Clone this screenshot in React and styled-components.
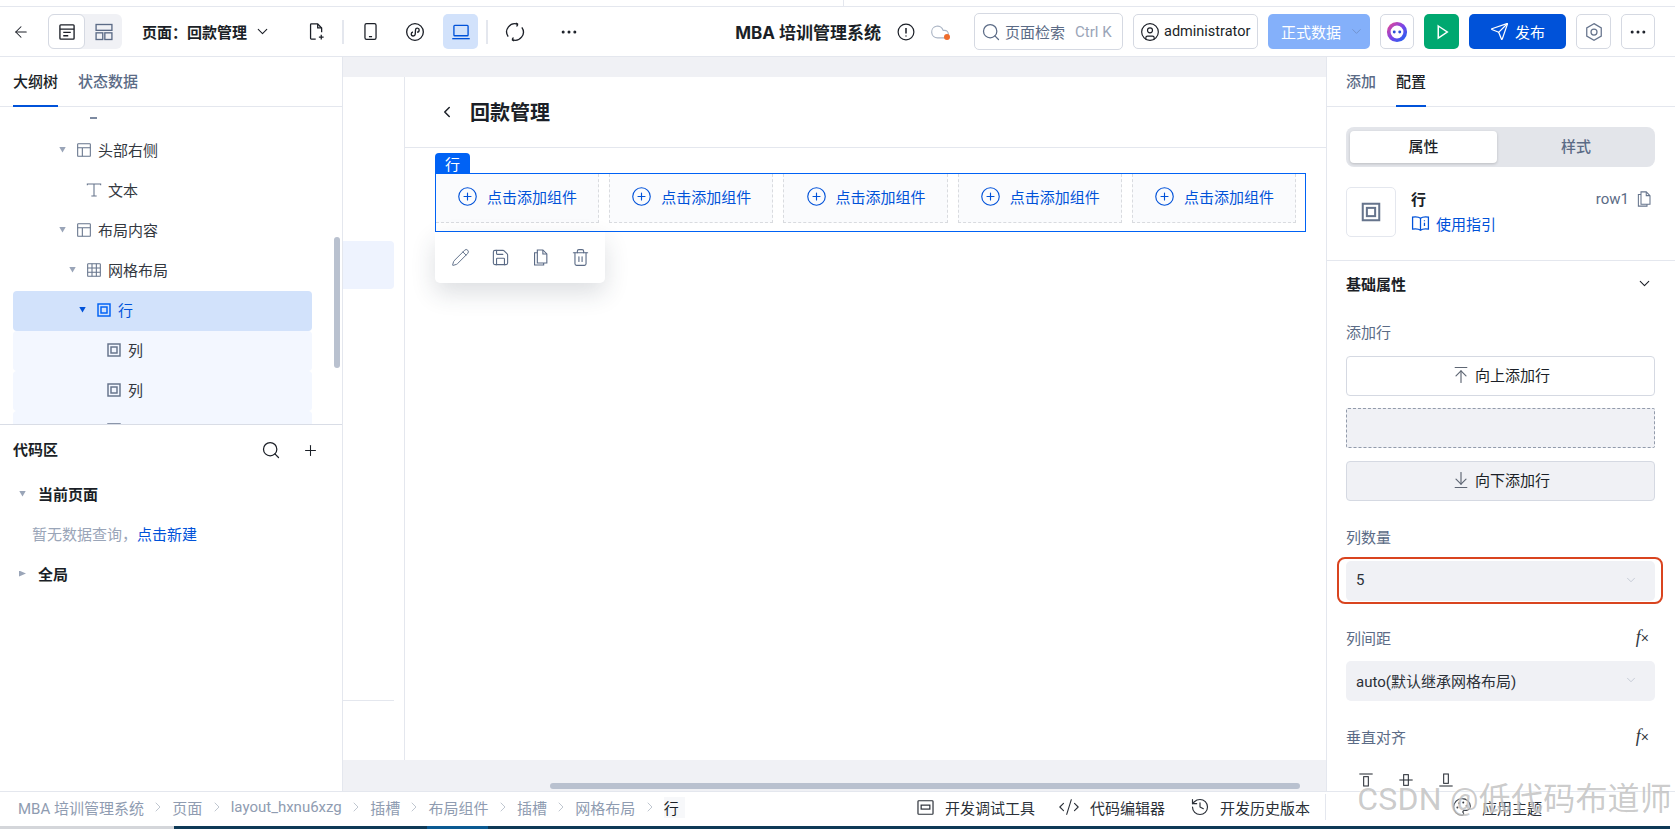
import React from "react";
import styled, { createGlobalStyle } from "styled-components";
import {
  ArrowLeft,
  ArrowDownToLine,
  ArrowUpToLine,
  ChevronDown,
  ChevronLeft,
  ChevronRight,
  CircleUser,
  Cloud,
  CodeXml,
  Ellipsis,
  History,
  Palette,
  Pencil,
  Plus,
  CirclePlus,
  Save,
  Search,
  Send,
  Trash2,
} from "lucide-react";

const colors = {
  ink: "#1b1f27",
  slate: "#5b6b86",
  muted: "#9aa5b8",
  line: "#e4e7ee",
  grey: "#f0f1f5",
  blue: "#0052d9",
  bright: "#0062f5",
  selected: "#d2e2fb",
  tint: "#f3f7ff",
};

const GlobalStyle = createGlobalStyle`
  html, body {
    margin: 0;
    height: 100%;
    overflow: hidden;
    background: #fff;
  }
  * { box-sizing: border-box; }
  body {
    font-family: Roboto, "Noto Sans CJK SC", sans-serif;
    font-size: 15px;
    color: ${colors.ink};
  }
`;

const Page = styled.div`
  position: relative;
  width: 1675px;
  height: 829px;
  display: flex;
  flex-direction: column;
  overflow: hidden;
`;

const TopStrip = styled.div`
  height: 7px;
  flex: none;
  border-bottom: 1px solid ${colors.line};
  padding-left: 843px;
  & > div {
    width: 1px;
    height: 6px;
    background: ${colors.line};
  }
`;

const Toolbar = styled.header`
  height: 50px;
  flex: none;
  display: flex;
  align-items: center;
  padding: 0 20px 0 12px;
  border-bottom: 1px solid ${colors.line};
`;

const Glyph = styled.svg.attrs((p) => ({
  viewBox: "0 0 24 24",
  fill: "none",
  stroke: "currentColor",
  strokeWidth: p.$weight || 1.6,
}))`
  width: ${(p) => p.$size || 18}px;
  height: ${(p) => p.$size || 18}px;
  flex: none;
  color: ${(p) => p.$color || "inherit"};
`;

const BackLink = styled.span`
  display: flex;
  width: 18px;
  margin-right: 18px;
`;

const ViewSwitch = styled.div`
  display: flex;
  width: 74px;
  height: 35px;
  background: ${colors.grey};
  border-radius: 6px;
  margin-right: 20px;
`;

const ViewOption = styled.span`
  width: 37px;
  display: flex;
  align-items: center;
  justify-content: center;
  border-radius: 6px;
  color: ${(p) => (p.$active ? colors.ink : colors.slate)};
  background: ${(p) => (p.$active ? "#fff" : "transparent")};
  border: ${(p) => (p.$active ? "1px solid #d5d9e2" : "none")};
`;

const PageTitle = styled.div`
  display: flex;
  align-items: center;
  gap: 7px;
  width: 147px;
  font-weight: 700;
  white-space: nowrap;
  margin-right: 10px;
  padding-bottom: 1px;
`;

const ToolButton = styled.span`
  width: 35px;
  height: 35px;
  display: flex;
  align-items: center;
  justify-content: center;
  border-radius: 5px;
  color: ${(p) => (p.$active ? colors.blue : colors.ink)};
  background: ${(p) => (p.$active ? colors.selected : "transparent")};
  margin-right: ${(p) => p.$gap ?? 9}px;
`;

const ToolDivider = styled.span`
  width: 2px;
  height: 24px;
  background: ${colors.line};
  margin-right: 9px;
`;

const RightTools = styled.div`
  margin-left: auto;
  display: flex;
  align-items: center;
  gap: 10px;
`;

const AppName = styled.div`
  font-size: 17px;
  font-weight: 700;
  white-space: nowrap;
  margin-right: 6px;
  font-family: Inter, "Noto Sans CJK SC", sans-serif;
`;

const CloudStatus = styled.span`
  position: relative;
  display: flex;
  width: 20px;
  margin: 0 14px 0 5px;
  color: #aab4c4;
  &::after {
    content: "";
    position: absolute;
    right: 0;
    bottom: 2px;
    width: 6px;
    height: 6px;
    border-radius: 50%;
    background: #ee6c2c;
  }
`;

const SearchBox = styled.div`
  width: 149px;
  height: 37px;
  display: flex;
  align-items: center;
  padding-left: 6px;
  border: 1px solid #d5d9e2;
  border-radius: 5px;
  color: ${colors.slate};
  white-space: nowrap;
  gap: 4px;
  & > em {
    font-style: normal;
    color: ${colors.muted};
    margin-left: 6px;
  }
`;

const UserBox = styled.div`
  width: 125px;
  height: 35px;
  display: flex;
  align-items: center;
  gap: 4px;
  padding-left: 6px;
  font-size: 14.5px;
  border: 1px solid #d5d9e2;
  border-radius: 5px;
`;

const DataSelect = styled.div`
  width: 102px;
  height: 35px;
  display: flex;
  align-items: center;
  gap: 8px;
  padding: 0 0 1px 13px;
  border-radius: 5px;
  background: #84b0fa;
  color: #fff;
  white-space: nowrap;
`;

const SquareButton = styled.span`
  width: ${(p) => p.$width || 35}px;
  height: 35px;
  display: flex;
  align-items: center;
  justify-content: center;
  border-radius: 5px;
  border: ${(p) => (p.$fill ? "none" : "1px solid #d5d9e2")};
  background: ${(p) => p.$fill || "#fff"};
  color: ${(p) => (p.$fill ? "#fff" : colors.ink)};
`;

const PublishButton = styled.span`
  width: 97px;
  height: 35px;
  display: flex;
  align-items: center;
  justify-content: center;
  gap: 6px;
  padding-bottom: 1px;
  border-radius: 5px;
  background: ${colors.blue};
  color: #fff;
`;

const Main = styled.main`
  flex: 1;
  min-height: 0;
  display: flex;
`;

const LeftPanel = styled.aside`
  width: 343px;
  flex: none;
  position: relative;
  display: flex;
  flex-direction: column;
  border-right: 1px solid ${colors.line};
`;

const TabRow = styled.div`
  height: 50px;
  flex: none;
  display: flex;
  gap: 20px;
  padding-left: ${(p) => p.$inset}px;
  border-bottom: 1px solid ${colors.line};
`;

const TabItem = styled.span`
  height: 50px;
  display: flex;
  align-items: center;
  padding-bottom: 2px;
  font-weight: 500;
  color: ${(p) => (p.$active ? colors.ink : colors.slate)};
  border-bottom: 2px solid ${(p) => (p.$active ? colors.blue : "transparent")};
`;

const Tree = styled.div`
  height: 318px;
  flex: none;
  overflow: hidden;
  padding: 0 30px 0 13px;
  border-bottom: 1px solid #d9dde6;
`;

const TreeStub = styled.div`
  height: 24px;
  padding: 10px 0 0 77px;
  &::before {
    content: "";
    display: block;
    width: 7px;
    height: 2px;
    background: #7d8aa1;
  }
`;

const TreeRow = styled.div`
  height: 40px;
  display: flex;
  align-items: center;
  padding: 0 0 3px ${(p) => 46 + p.$level * 10}px;
  border-radius: 4px;
  background: ${(p) =>
    p.$selected ? colors.selected : p.$child ? colors.tint : "transparent"};
  color: ${(p) => (p.$selected ? colors.blue : "#33383f")};
  & > svg {
    margin-right: 6px;
    color: ${(p) => (p.$selected ? colors.bright : "#66748c")};
  }
`;

const Caret = styled.i`
  width: 7px;
  height: 6px;
  flex: none;
  margin-right: 10px;
  visibility: ${(p) => (p.$hidden ? "hidden" : "visible")};
  clip-path: ${(p) =>
    p.$closed
      ? "polygon(0 0, 100% 50%, 0 100%)"
      : "polygon(0 0, 100% 0, 50% 100%)"};
  background: ${(p) => (p.$selected ? colors.blue : colors.muted)};
`;

const Scrollbar = styled.div`
  position: absolute;
  left: 334px;
  top: 180px;
  width: 6px;
  height: 131px;
  border-radius: 3px;
  background: #b9c1cf;
`;

const CodeHead = styled.div`
  height: 50px;
  display: flex;
  align-items: center;
  padding: 0 23px 0 13px;
  font-weight: 700;
  & > span {
    flex: 1;
    padding-bottom: 3px;
  }
  & > svg + svg {
    margin-left: 21px;
  }
`;

const CodeGroup = styled.div`
  height: 40px;
  display: flex;
  align-items: center;
  padding: 0 0 3px 19px;
  font-weight: 700;
  & > i {
    margin-right: 12px;
  }
`;

const EmptyHint = styled.div`
  height: 40px;
  display: flex;
  align-items: center;
  padding: 0 0 3px 32px;
  color: ${colors.muted};
  & > a {
    color: ${colors.blue};
  }
`;

const Canvas = styled.section`
  flex: 1;
  min-width: 0;
  display: flex;
  flex-direction: column;
  background: ${colors.grey};
  padding-top: 20px;
`;

const CanvasBody = styled.div`
  height: 683px;
  flex: none;
  display: flex;
  background: #fff;
`;

const Gutter = styled.div`
  width: 62px;
  flex: none;
  position: relative;
  border-right: 1px solid ${colors.line};
`;

const GhostBlock = styled.div`
  position: absolute;
  left: 0;
  top: 164px;
  width: 51px;
  height: 48px;
  border-radius: 0 4px 4px 0;
  background: #eef3fe;
`;

const GhostLine = styled.div`
  position: absolute;
  left: 0;
  top: 623px;
  width: 51px;
  height: 1px;
  background: ${colors.line};
`;

const Sheet = styled.div`
  flex: 1;
  min-width: 0;
`;

const SheetHead = styled.div`
  height: 71px;
  display: flex;
  align-items: center;
  gap: 14px;
  padding: 0 0 1px 33px;
  font-size: 20px;
  font-weight: 700;
  border-bottom: 1px solid ${colors.line};
`;

const RowFrame = styled.div`
  position: relative;
  display: flex;
  gap: 10px;
  margin: 25px 20px 0 30px;
  height: 59px;
  padding: 0 9px 8px 0;
  border: 1px solid ${colors.bright};
`;

const RowTag = styled.span`
  position: absolute;
  left: -1px;
  top: -21px;
  width: 35px;
  height: 20px;
  display: flex;
  align-items: center;
  justify-content: center;
  color: #fff;
  background: ${colors.bright};
  border-radius: 4px 4px 0 0;
`;

const SlotCell = styled.div`
  flex: 1;
  display: flex;
  align-items: center;
  justify-content: center;
  gap: 9px;
  padding-bottom: 3px;
  color: ${colors.blue};
  background: #fafbfd;
  border: 1px dashed #d9dbdf;
  border-top: none;
  border-left: ${(p) => (p.$first ? "none" : "1px dashed #d9dbdf")};
`;

const FloatBar = styled.div`
  position: absolute;
  left: -1px;
  top: calc(100% + 1px);
  width: 170px;
  height: 51px;
  display: flex;
  align-items: center;
  gap: 21px;
  padding-left: 16px;
  background: #fff;
  border-radius: 0 0 5px 5px;
  color: ${colors.slate};
  box-shadow: 0 10px 24px rgba(40, 50, 70, 0.16);
`;

const CanvasFoot = styled.div`
  flex: 1;
  padding: 23px 0 0 207px;
  & > div {
    width: 750px;
    height: 6px;
    border-radius: 3px;
    background: #b9c1cf;
  }
`;

const RightPanel = styled.aside`
  width: 349px;
  flex: none;
  overflow: hidden;
  border-left: 1px solid ${colors.line};
`;

const PropTabs = styled.div`
  margin: 20px 20px 0 19px;
  height: 40px;
  display: flex;
  padding: 4px 0 4px 4px;
  border-radius: 8px;
  background: #e3e5ea;
`;

const PropTab = styled.span`
  flex: ${(p) => (p.$active ? "0 0 147px" : "1")};
  display: flex;
  align-items: center;
  justify-content: center;
  padding-bottom: 3px;
  font-weight: 500;
  border-radius: 4px;
  color: ${(p) => (p.$active ? colors.ink : colors.slate)};
  background: ${(p) => (p.$active ? "#fff" : "transparent")};
  box-shadow: ${(p) => (p.$active ? "0 1px 3px rgba(0,0,0,0.18)" : "none")};
`;

const CompCard = styled.div`
  display: flex;
  gap: 15px;
  margin: 20px 22px 0 19px;
  padding-bottom: 23px;
`;

const CompIcon = styled.span`
  width: 50px;
  height: 50px;
  flex: none;
  display: flex;
  align-items: center;
  justify-content: center;
  border: 1px solid ${colors.line};
  border-radius: 5px;
  color: #66748c;
`;

const CompText = styled.div`
  flex: 1;
  min-width: 0;
  & > div {
    height: 25px;
    display: flex;
    align-items: center;
    gap: 6px;
    padding-bottom: 2px;
  }
`;

const CompName = styled.b`
  flex: 1;
  font-weight: 700;
`;

const CompId = styled.span`
  color: ${colors.slate};
`;

const GuideLink = styled.a`
  color: ${colors.blue};
`;

const Section = styled.div`
  border-top: 1px solid ${colors.line};
  padding: 0 20px 0 19px;
`;

const SectionHead = styled.div`
  height: 48px;
  display: flex;
  align-items: center;
  justify-content: space-between;
  font-weight: 700;
  padding: 0 2px 3px 0;
`;

const FieldLabel = styled.div`
  height: 22px;
  display: flex;
  align-items: center;
  justify-content: space-between;
  padding-bottom: 2px;
  color: ${colors.slate};
  margin: ${(p) => p.$top ?? 25}px 0 ${(p) => p.$bottom ?? 12}px;
`;

const FxMark = styled.span`
  font-family: "Liberation Serif", serif;
  font-style: italic;
  font-size: 18px;
  color: #333840;
  padding-right: 6px;
  & > small {
    font-family: "Liberation Sans", sans-serif;
    font-style: normal;
    font-size: 14px;
  }
`;

const RowButton = styled.div`
  height: 40px;
  display: flex;
  align-items: center;
  justify-content: center;
  gap: 4px;
  padding-bottom: 3px;
  border-radius: 4px;
  border: 1px solid #d5d9e2;
  background: ${(p) => (p.$filled ? colors.grey : "#fff")};
  margin-bottom: ${(p) => p.$bottom || 0}px;
  & > svg {
    color: #5f6774;
  }
`;

const DropZone = styled.div`
  height: 40px;
  margin-bottom: 13px;
  border: 1px dashed #929bab;
  border-radius: 2px;
  background: ${colors.grey};
`;

const SelectBox = styled.div`
  position: relative;
  height: 40px;
  display: flex;
  align-items: center;
  justify-content: space-between;
  padding: 0 17px 2px 10px;
  border-radius: 5px;
  background: ${colors.grey};
  color: #2b3038;
  &::after {
    content: "";
    display: ${(p) => (p.$marked ? "block" : "none")};
    position: absolute;
    inset: -4px -8px -3px -9px;
    border: 2px solid #d9441f;
    border-radius: 8px;
  }
`;

const AlignRow = styled.div`
  display: flex;
  gap: 24px;
  margin: 24px 0 0 12px;
  color: #2b3038;
`;

const StatusBar = styled.footer`
  position: relative;
  height: 35px;
  flex: none;
  display: flex;
  align-items: center;
  padding: 0 0 4px 18px;
  background: #fff;
  border-top: 1px solid ${colors.line};
`;

const Crumb = styled.span`
  color: ${(p) => (p.$current ? colors.ink : "#8f9cb1")};
  background: ${(p) => (p.$current ? "#f7f8fa" : "transparent")};
  padding-right: ${(p) => (p.$current ? "6px" : 0)};
  white-space: nowrap;
`;

const CrumbSep = styled(ChevronRight)`
  width: 16px;
  height: 16px;
  margin: 0 6.2px;
  color: #b6bec9;
  stroke-width: 1.3;
`;

const StatusTools = styled.div`
  margin-left: auto;
  display: flex;
  align-items: center;
  height: 100%;
  padding-right: 133px;
`;

const StatusItem = styled.span`
  display: flex;
  align-items: center;
  gap: ${(p) => p.$gap || 10}px;
  white-space: nowrap;
  margin-right: ${(p) => p.$right || 0}px;
  color: #2b3038;
`;

const StatusDivider = styled.span`
  width: 1px;
  height: 26px;
  background: ${colors.line};
  margin-right: 126px;
`;

const TaskBand = styled.div`
  height: 3px;
  flex: none;
  display: flex;
  & > i:nth-child(1) { width: 174px; background: #d4d6da; }
  & > i:nth-child(2) { width: 253px; background: #0f3a57; }
  & > i:nth-child(3) { width: 61px; background: #0b5a92; }
  & > i:nth-child(4) { width: 1182px; background: #0f3a57; }
`;

const Watermark = styled.div`
  position: absolute;
  right: 3px;
  top: 778px;
  font-size: 32px;
  line-height: 42px;
  letter-spacing: 0.2px;
  white-space: nowrap;
  color: rgba(130, 130, 130, 0.42);
  text-shadow: 0 0 2px #fff;
  pointer-events: none;
`;

const RowIcon = (props) => (
  <Glyph {...props}>
    <rect x="3" y="3" width="18" height="18" strokeWidth="2.2" />
    <rect x="7.5" y="7.5" width="9" height="9" strokeWidth="2.2" />
  </Glyph>
);

const LayoutIcon = (props) => (
  <Glyph {...props}>
    <rect x="2.5" y="2.5" width="19" height="19" rx="1" />
    <path d="M2.5 8.5h19M9.5 8.5v13" />
  </Glyph>
);

const GridIcon = (props) => (
  <Glyph {...props}>
    <rect x="2.5" y="2.5" width="19" height="19" rx="1" />
    <path d="M2.5 9h19M2.5 15.5h19M9 2.5v19M15.5 2.5v19" />
  </Glyph>
);

const TextIcon = (props) => (
  <Glyph {...props}>
    <path d="M2 5V3h20v2M12 3v18M8 21h8" />
  </Glyph>
);

const DocListIcon = (props) => (
  <Glyph {...props}>
    <rect x="3.5" y="3.5" width="17" height="17" rx="1" />
    <path d="M3.5 8.5h17M7.5 12.5h9M7.5 16.5h6" />
  </Glyph>
);

const BlocksIcon = (props) => (
  <Glyph {...props}>
    <rect x="2.5" y="3" width="19" height="7" />
    <rect x="2.5" y="13" width="8" height="8" />
    <rect x="13" y="13" width="8.5" height="8" />
  </Glyph>
);

const NewPageIcon = (props) => (
  <Glyph {...props}>
    <path d="M11 21.5H5.5a1 1 0 0 1-1-1v-17a1 1 0 0 1 1-1h8l5 5V13" />
    <path d="M13.5 2.5v5h5M18 16v6M15 19h6" />
  </Glyph>
);

const PhoneIcon = (props) => (
  <Glyph {...props}>
    <rect x="5" y="2" width="14" height="20" rx="2" />
    <path d="M10 18.5h4" />
  </Glyph>
);

const MiniAppIcon = (props) => (
  <Glyph {...props}>
    <circle cx="12" cy="12" r="10" />
    <path d="M7.5 14.5c0 3 4.5 3 4.8 0l.3-5c.2-3 4.4-2.8 4.4 0 0 2-1.6 2.6-2.6 2.6M9.5 12c-1 .2-2 1-2 2.5" />
  </Glyph>
);

const DesktopIcon = (props) => (
  <Glyph {...props}>
    <rect x="3.5" y="4" width="17" height="12.5" rx="1" />
    <path d="M1.5 20h21" />
  </Glyph>
);

const SyncIcon = (props) => (
  <Glyph {...props}>
    <path d="M3.8 17.5A9.8 9.8 0 0 1 15.5 2.8M20.2 6.5A9.8 9.8 0 0 1 8.5 21.2" />
    <path d="M15.5 2.8l-2.6-1.6M15.5 2.8l-1.6 2.6M8.5 21.2l2.6 1.6M8.5 21.2l1.6-2.6" />
  </Glyph>
);

const InfoIcon = (props) => (
  <Glyph {...props}>
    <circle cx="12" cy="12" r="10.5" />
    <path d="M12 6.5v7.5M12 16.5v1.5" strokeWidth="2" />
  </Glyph>
);

const PlayIcon = (props) => (
  <Glyph {...props}>
    <path d="M7 4l12 8-12 8z" strokeWidth="2" />
  </Glyph>
);

const HexIcon = (props) => (
  <Glyph {...props}>
    <path d="M12 2l8.7 5v10L12 22l-8.7-5V7z" />
    <circle cx="12" cy="12" r="3.6" />
  </Glyph>
);

const CopilotIcon = () => (
  <svg width="22" height="22" viewBox="0 0 24 24">
    <defs>
      <linearGradient id="copilot-ring" x1="0" y1="0" x2="1" y2="1">
        <stop offset="0" stopColor="#e0469a" />
        <stop offset="0.5" stopColor="#7a45e8" />
        <stop offset="1" stopColor="#1f62f0" />
      </linearGradient>
    </defs>
    <circle cx="12" cy="12" r="9" fill="#fff" stroke="url(#copilot-ring)" strokeWidth="4" />
    <circle cx="9" cy="12" r="1.6" fill="#2a4fd8" />
    <circle cx="15" cy="12" r="1.6" fill="#2a4fd8" />
  </svg>
);

const CopyDocIcon = (props) => (
  <Glyph {...props}>
    <path d="M8 2.5h7l5 5v11.5H8z" />
    <path d="M15 2.5v5h5M8 6H4.5v15.5H16V19" />
  </Glyph>
);

const GuideIcon = (props) => (
  <Glyph {...props}>
    <path d="M12 5.5C10 3.8 6 3.5 2 4v15c4-.5 8-.2 10 1.5 2-1.7 6-2 10-1.5V4c-4-.5-8-.2-10 1.5zM12 5.5v15" />
    <path d="M17 8v1M17 11v4" />
  </Glyph>
);

const AlignTopIcon = (props) => (
  <Glyph {...props}>
    <path d="M2 3h20" />
    <rect x="8.5" y="7" width="7" height="14" />
  </Glyph>
);

const AlignMiddleIcon = (props) => (
  <Glyph {...props}>
    <path d="M2 12h20" />
    <rect x="8.5" y="4" width="7" height="16" />
  </Glyph>
);

const AlignBottomIcon = (props) => (
  <Glyph {...props}>
    <path d="M2 21h20" />
    <rect x="8.5" y="3" width="7" height="14" />
  </Glyph>
);

const DebugIcon = (props) => (
  <Glyph {...props}>
    <rect x="2.5" y="3.5" width="19" height="17" rx="1" />
    <rect x="6.5" y="9" width="11" height="5" />
  </Glyph>
);

const outline = [
  { level: 0, label: "头部右侧", Icon: LayoutIcon },
  { level: 1, label: "文本", Icon: TextIcon, leaf: true },
  { level: 0, label: "布局内容", Icon: LayoutIcon },
  { level: 1, label: "网格布局", Icon: GridIcon },
  { level: 2, label: "行", Icon: RowIcon, selected: true },
  { level: 3, label: "列", Icon: RowIcon, leaf: true, child: true },
  { level: 3, label: "列", Icon: RowIcon, leaf: true, child: true },
  { level: 3, label: "", Icon: RowIcon, leaf: true, child: true },
];

const crumbs = ["MBA 培训管理系统", "页面", "layout_hxnu6xzg", "插槽", "布局组件", "插槽", "网格布局"];

export default function App() {
  return (
    <Page>
      <GlobalStyle />
      <TopStrip>
        <div />
      </TopStrip>
      <Toolbar>
        <BackLink>
          <ArrowLeft size={20} strokeWidth={1.4} />
        </BackLink>
        <ViewSwitch>
          <ViewOption $active>
            <DocListIcon $size={20} />
          </ViewOption>
          <ViewOption>
            <BlocksIcon $size={20} />
          </ViewOption>
        </ViewSwitch>
        <PageTitle>
          页面：回款管理
          <ChevronDown size={17} strokeWidth={1.5} />
        </PageTitle>
        <ToolButton $gap={8}>
          <NewPageIcon $size={19} />
        </ToolButton>
        <ToolDivider />
        <ToolButton>
          <PhoneIcon $size={19} />
        </ToolButton>
        <ToolButton $gap={11}>
          <MiniAppIcon $size={20} />
        </ToolButton>
        <ToolButton $active $gap={8}>
          <DesktopIcon $size={20} />
        </ToolButton>
        <ToolDivider />
        <ToolButton $gap={19}>
          <SyncIcon $size={20} />
        </ToolButton>
        <ToolButton>
          <Ellipsis size={20} strokeWidth={1.6} />
        </ToolButton>
        <RightTools>
          <AppName>MBA 培训管理系统</AppName>
          <InfoIcon />
          <CloudStatus>
            <Cloud size={20} strokeWidth={1.4} />
          </CloudStatus>
          <SearchBox>
            <Search size={20} strokeWidth={1.5} />
            页面检索
            <em>Ctrl K</em>
          </SearchBox>
          <UserBox>
            <CircleUser size={20} strokeWidth={1.4} />
            administrator
          </UserBox>
          <DataSelect>
            正式数据
            <ChevronDown size={15} strokeWidth={1.4} color="#6f8fc8" />
          </DataSelect>
          <SquareButton $width={34}>
            <CopilotIcon />
          </SquareButton>
          <SquareButton $fill="#00a870">
            <PlayIcon $size={18} />
          </SquareButton>
          <PublishButton>
            <Send size={19} strokeWidth={1.6} />
            发布
          </PublishButton>
          <SquareButton>
            <HexIcon $size={20} $color="#66748c" $weight={1.5} />
          </SquareButton>
          <SquareButton $width={34}>
            <Ellipsis size={20} strokeWidth={1.6} />
          </SquareButton>
        </RightTools>
      </Toolbar>
      <Main>
        <LeftPanel>
          <TabRow $inset={13}>
            <TabItem $active>大纲树</TabItem>
            <TabItem>状态数据</TabItem>
          </TabRow>
          <Tree>
            <TreeStub />
            {outline.map((node, i) => (
              <TreeRow key={i} $level={node.level} $selected={node.selected} $child={node.child}>
                <Caret $hidden={node.leaf} $selected={node.selected} />
                <node.Icon $size={16} />
                {node.label}
              </TreeRow>
            ))}
          </Tree>
          <Scrollbar />
          <CodeHead>
            <span>代码区</span>
            <Search size={20} strokeWidth={1.5} />
            <Plus size={17} strokeWidth={1.5} />
          </CodeHead>
          <CodeGroup>
            <Caret />
            当前页面
          </CodeGroup>
          <EmptyHint>
            暂无数据查询，<a>点击新建</a>
          </EmptyHint>
          <CodeGroup>
            <Caret $closed />
            全局
          </CodeGroup>
        </LeftPanel>
        <Canvas>
          <CanvasBody>
            <Gutter>
              <GhostBlock />
              <GhostLine />
            </Gutter>
            <Sheet>
              <SheetHead>
                <ChevronLeft size={18} strokeWidth={2} />
                回款管理
              </SheetHead>
              <RowFrame>
                <RowTag>行</RowTag>
                {[0, 1, 2, 3, 4].map((n) => (
                  <SlotCell key={n} $first={n === 0}>
                    <CirclePlus size={21} strokeWidth={1.3} />
                    点击添加组件
                  </SlotCell>
                ))}
                <FloatBar>
                  <Pencil size={19} strokeWidth={1.2} />
                  <Save size={19} strokeWidth={1.4} />
                  <CopyDocIcon $size={19} $weight={1.4} />
                  <Trash2 size={19} strokeWidth={1.4} />
                </FloatBar>
              </RowFrame>
            </Sheet>
          </CanvasBody>
          <CanvasFoot>
            <div />
          </CanvasFoot>
        </Canvas>
        <RightPanel>
          <TabRow $inset={19}>
            <TabItem>添加</TabItem>
            <TabItem $active>配置</TabItem>
          </TabRow>
          <PropTabs>
            <PropTab $active>属性</PropTab>
            <PropTab>样式</PropTab>
          </PropTabs>
          <CompCard>
            <CompIcon>
              <RowIcon $size={22} />
            </CompIcon>
            <CompText>
              <div>
                <CompName>行</CompName>
                <CompId>row1</CompId>
                <CopyDocIcon $size={18} $color="#66748c" $weight={1.4} />
              </div>
              <div>
                <GuideIcon $size={19} $color={colors.blue} />
                <GuideLink>使用指引</GuideLink>
              </div>
            </CompText>
          </CompCard>
          <Section>
            <SectionHead>
              基础属性
              <ChevronDown size={17} strokeWidth={1.5} />
            </SectionHead>
            <FieldLabel $top={12} $bottom={13}>
              添加行
            </FieldLabel>
            <RowButton $bottom={12}>
              <ArrowUpToLine size={20} strokeWidth={1.4} />
              向上添加行
            </RowButton>
            <DropZone />
            <RowButton $filled>
              <ArrowDownToLine size={20} strokeWidth={1.4} />
              向下添加行
            </RowButton>
            <FieldLabel $bottom={13}>列数量</FieldLabel>
            <SelectBox $marked>
              5
              <ChevronDown size={14} strokeWidth={1.2} color="#b4bbc8" />
            </SelectBox>
            <FieldLabel $top={26}>
              列间距
              <FxMark>
                f<small>×</small>
              </FxMark>
            </FieldLabel>
            <SelectBox>
              auto(默认继承网格布局)
              <ChevronDown size={14} strokeWidth={1.2} color="#b4bbc8" />
            </SelectBox>
            <FieldLabel>
              垂直对齐
              <FxMark>
                f<small>×</small>
              </FxMark>
            </FieldLabel>
            <AlignRow>
              <AlignTopIcon $size={16} />
              <AlignMiddleIcon $size={16} />
              <AlignBottomIcon $size={16} />
            </AlignRow>
          </Section>
        </RightPanel>
      </Main>
      <StatusBar>
        {crumbs.map((c, i) => (
          <React.Fragment key={i}>
            <Crumb>{c}</Crumb>
            <CrumbSep />
          </React.Fragment>
        ))}
        <Crumb $current>行</Crumb>
        <StatusTools>
          <StatusItem $right={23}>
            <DebugIcon $size={19} $weight={1.5} />
            开发调试工具
          </StatusItem>
          <StatusItem $right={25}>
            <CodeXml size={22} strokeWidth={1.2} />
            代码编辑器
          </StatusItem>
          <StatusItem $right={15}>
            <History size={20} strokeWidth={1.4} />
            开发历史版本
          </StatusItem>
          <StatusDivider />
          <StatusItem>
            <Palette size={20} strokeWidth={1.4} />
            应用主题
          </StatusItem>
        </StatusTools>
      </StatusBar>
      <TaskBand>
        <i />
        <i />
        <i />
        <i />
      </TaskBand>
      <Watermark>CSDN @低代码布道师</Watermark>
    </Page>
  );
}
